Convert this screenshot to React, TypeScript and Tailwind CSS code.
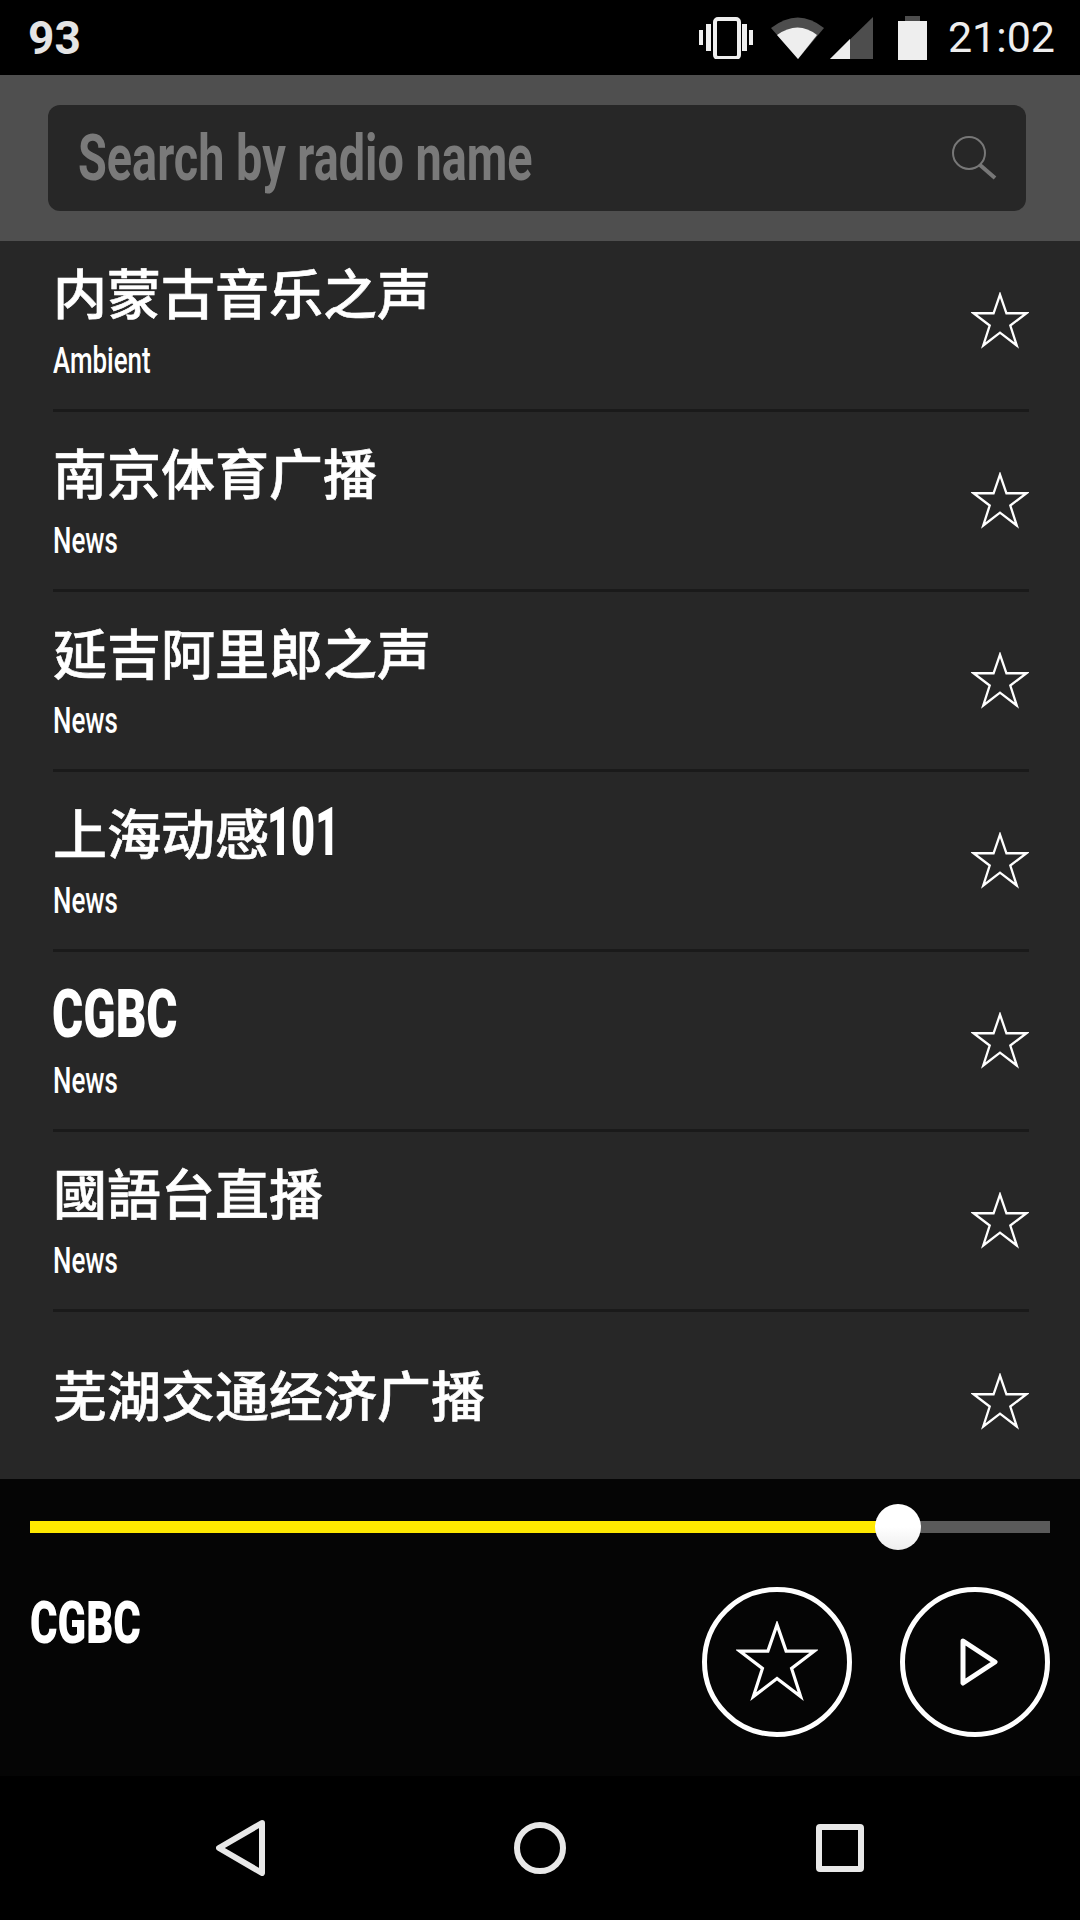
const STATIONS = [
  { name: "内蒙古音乐之声", genre: "Ambient" },
  { name: "南京体育广播", genre: "News" },
  { name: "延吉阿里郎之声", genre: "News" },
  { name: "上海动感", latin: "101", genre: "News" },
  { latin: "CGBC", genre: "News" },
  { name: "國語台直播", genre: "News" },
  { name: "芜湖交通经济广播" },
];

const STAR_POINTS = "0,-41 10,-12 41,-12 16,7 26,38 0,18 -26,38 -16,7 -41,-12 -10,-12";

function Star({ className, strokeWidth }: { className: string; strokeWidth: number }) {
  return (
    <svg viewBox="-45 -45 90 90" fill="none" className={className}>
      <polygon points={STAR_POINTS} stroke="#fff" strokeWidth={strokeWidth} strokeLinejoin="miter" />
    </svg>
  );
}

function StatusBar() {
  return (
    <div className="flex h-[75px] shrink-0 items-center bg-black pl-[28px] pr-[25px] text-[#eeeeee]">
      <span className="flex-1 font-['Roboto'] text-[46px] font-bold leading-none text-[#e4e4e4]">93</span>
      <svg viewBox="0 0 54 42" className="h-[42px] w-[54px]" fill="#eeeeee">
        <rect x="0" y="13" width="4" height="15" />
        <rect x="7" y="7" width="5" height="27" />
        <rect x="16" y="2" width="24" height="39" rx="3" fill="none" stroke="#eeeeee" strokeWidth="4" />
        <rect x="43" y="7" width="5" height="27" />
        <rect x="50" y="13" width="4" height="15" />
      </svg>
      <svg viewBox="0 0 54 42" className="ml-[18px] h-[42px] w-[54px]">
        <path d="M0 11 Q27 -10 53 11 L27 42 Z" fill="#4d4d4d" />
        <path d="M6 18 Q27 3 46 18 L27 42 Z" fill="#eeeeee" />
      </svg>
      <svg viewBox="0 0 43 42" className="ml-[5px] h-[42px] w-[43px]">
        <path d="M43 0 V42 H0 Z" fill="#4d4d4d" />
        <path d="M20 22 V42 H0 Z" fill="#eeeeee" />
      </svg>
      <svg viewBox="0 0 29 44" className="ml-[25px] h-[44px] w-[29px]">
        <rect x="7" y="0" width="15" height="6" fill="#4d4d4d" />
        <rect x="0" y="5" width="29" height="39" fill="#eeeeee" />
      </svg>
      <span className="ml-[21px] font-['Roboto'] text-[43px] leading-none">21:02</span>
    </div>
  );
}

function SearchBar() {
  return (
    <div className="shrink-0 bg-[#4f4f4f] pb-[30px] pl-[48px] pr-[54px] pt-[30px]">
      <div className="flex h-[106px] items-center rounded-[12px] bg-[#272727] pl-[30px] pr-[28px]">
        <span className="flex-1 origin-left scale-x-[0.72] whitespace-nowrap font-['Roboto',sans-serif] text-[65px] font-bold leading-none text-[#7a7a7a]">
          Search by radio name
        </span>
        <svg viewBox="0 0 46 44" className="h-[44px] w-[46px]" fill="none" stroke="#777777">
          <circle cx="17" cy="17" r="16" strokeWidth="2" />
          <path d="M28 29 L43 42" strokeWidth="4" />
        </svg>
      </div>
    </div>
  );
}

function StationRow({ name, latin, genre, last }: { name?: string; latin?: string; genre?: string; last: boolean }) {
  return (
    <div className={last ? "flex h-[180px] items-center" : "flex h-[180px] items-center border-b-[3px] border-[#1a1a1a]"}>
      <div className={genre ? "flex flex-1 flex-col" : "mb-[16px] flex flex-1 flex-col"}>
        <div className="flex h-[70px] items-center whitespace-nowrap text-white">
          {name && (
            <span className="font-['Noto_Sans_CJK_SC',sans-serif] text-[54px] font-medium leading-[70px] [-webkit-text-stroke:0.6px_white]">
              {name}
            </span>
          )}
          {latin && (
            <span
              className={
                name
                  ? "ml-[-2px] origin-left scale-x-[0.62] font-['Roboto',sans-serif] text-[67px] font-black leading-[70px]"
                  : "ml-[-1px] mt-[5px] origin-left scale-x-[0.71] font-['Roboto',sans-serif] text-[67px] font-black leading-[70px]"
              }
            >
              {latin}
            </span>
          )}
        </div>
        {genre && (
          <div className="mt-[10px] origin-left scale-x-[0.7] font-['Roboto',sans-serif] text-[37px] font-medium leading-[48px] text-white">
            {genre}
          </div>
        )}
      </div>
      <Star className="h-[58px] w-[58px]" strokeWidth={3.6} />
    </div>
  );
}

function Player() {
  return (
    <div className="h-[297px] shrink-0 bg-[#050505] px-[30px] pt-[42px]">
      <div className="relative h-[12px] bg-[#5a5a5a]">
        <div className="h-full w-[868px] bg-[#ffe900]" />
        <div className="absolute left-[845px] top-[-17px] h-[46px] w-[46px] rounded-full bg-gradient-to-b from-white from-50% to-[#eeeeee]" />
      </div>
      <div className="mt-[54px] flex">
        <span className="flex-1 origin-left scale-x-[0.7] pt-[4px] font-['Roboto',sans-serif] text-[60px] font-black leading-[64px] text-white">
          CGBC
        </span>
        <div className="flex h-[150px] w-[150px] items-center justify-center rounded-full border-[5px] border-white">
          <Star className="h-[82px] w-[82px]" strokeWidth={3.5} />
        </div>
        <div className="ml-[48px] flex h-[150px] w-[150px] items-center justify-center rounded-full border-[5px] border-white">
          <svg viewBox="0 0 40 50" className="ml-[8px] h-[50px] w-[40px]" fill="none">
            <path d="M4 4 L36 25 L4 46 Z" stroke="#fff" strokeWidth="5" strokeLinejoin="round" />
          </svg>
        </div>
      </div>
    </div>
  );
}

function NavBar() {
  return (
    <div className="flex h-[144px] shrink-0 items-center justify-center bg-black">
      <svg viewBox="0 0 50 56" className="h-[56px] w-[50px]" fill="none" stroke="#e8e8e8" strokeWidth="6" strokeLinejoin="round">
        <path d="M46 3 L3 28 L46 53 Z" />
      </svg>
      <div className="ml-[248px] h-[52px] w-[52px] rounded-full border-[6px] border-[#e8e8e8]" />
      <div className="ml-[250px] h-[48px] w-[48px] rounded-[4px] border-[6px] border-[#e8e8e8]" />
    </div>
  );
}

export default function App() {
  return (
    <div className="flex h-[1920px] w-[1080px] flex-col overflow-hidden">
      <StatusBar />
      <SearchBar />
      <div className="min-h-0 flex-1 overflow-hidden bg-[#272727] pl-[53px] pr-[51px]">
        <div className="mt-[-9px]">
          {STATIONS.map((s, i) => (
            <StationRow key={i} {...s} last={i === STATIONS.length - 1} />
          ))}
        </div>
      </div>
      <Player />
      <NavBar />
    </div>
  );
}
